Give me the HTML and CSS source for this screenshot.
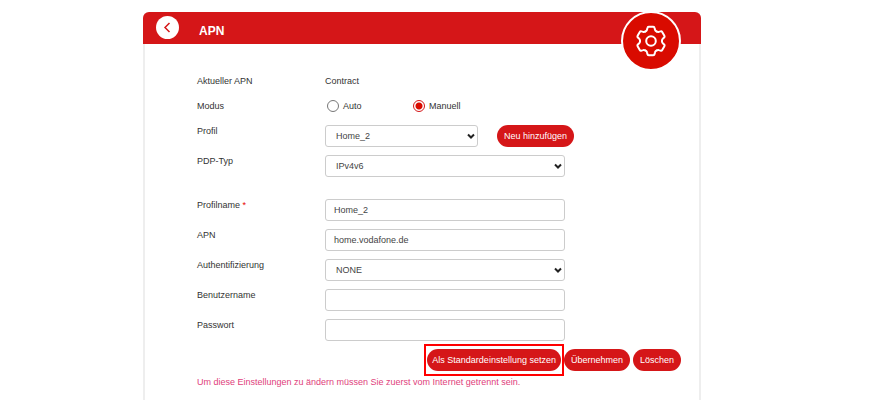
FILE: index.html
```html
<!DOCTYPE html>
<html lang="de">
<head>
<meta charset="utf-8">
<meta name="viewport" content="width=device-width, initial-scale=1">
<title>APN</title>
<link rel="stylesheet" href="styles.css">
</head>
<body>
<main class="panel">
  <header class="panel-header">
    <button class="back" type="button" aria-label="Zurück">
      <svg viewBox="0 0 24 24" width="24" height="24" fill="none" stroke="currentColor" stroke-width="1.5"><path d="M13.500 7 9 11.500l4.500 4.500"/></svg>
    </button>
    <h1>APN</h1>
    <div class="badge">
      <svg viewBox="-16 -16 32 32" width="32" height="32" fill="none" stroke="currentColor" stroke-width="2" stroke-linecap="round">
        <path id="tooth" d="M-5.500-9.500Q-4.200-10.250-4-11.300L-3.600-13Q-3.400-14.200-2.200-14.200H2.200Q3.400-14.200 3.600-13L4-11.300Q4.200-10.250 5.500-9.500"/>
        <use href="#tooth" transform="rotate(60)"/>
        <use href="#tooth" transform="rotate(120)"/>
        <use href="#tooth" transform="rotate(180)"/>
        <use href="#tooth" transform="rotate(240)"/>
        <use href="#tooth" transform="rotate(300)"/>
        <circle r="4.800"/>
      </svg>
    </div>
  </header>
  <form class="form">
    <div class="row row-text">
      <span class="label">Aktueller APN</span>
      <span class="value">Contract</span>
    </div>
    <div class="row row-mode" role="radiogroup" aria-labelledby="mode">
      <span class="label" id="mode">Modus</span>
      <div class="radios">
        <label class="radio"><input type="radio" name="mode"><span>Auto</span></label>
        <label class="radio"><input type="radio" name="mode" checked><span>Manuell</span></label>
      </div>
    </div>
    <div class="row row-profile">
      <label class="label" for="profile">Profil</label>
      <div class="profile">
        <div class="select">
          <select id="profile"><option>Home_2</option></select>
          <svg class="chevron" viewBox="0 0 8 6" width="8" height="6"><path d="m1 1.500 3 3 3-3"/></svg>
        </div>
        <button class="pill" type="button">Neu hinzufügen</button>
      </div>
    </div>
    <div class="row">
      <label class="label" for="pdp">PDP-Typ</label>
      <div class="select">
        <select id="pdp"><option>IPv4v6</option></select>
        <svg class="chevron" viewBox="0 0 8 6" width="8" height="6"><path d="m1 1.500 3 3 3-3"/></svg>
      </div>
    </div>
    <div class="group">
      <div class="row">
        <label class="label" for="name">Profilname <span class="required">*</span></label>
        <input class="text" id="name" type="text" value="Home_2">
      </div>
      <div class="row">
        <label class="label" for="apn">APN</label>
        <input class="text" id="apn" type="text" value="home.vodafone.de">
      </div>
      <div class="row">
        <label class="label" for="auth">Authentifizierung</label>
        <div class="select">
          <select id="auth"><option>NONE</option></select>
          <svg class="chevron" viewBox="0 0 8 6" width="8" height="6"><path d="m1 1.500 3 3 3-3"/></svg>
        </div>
      </div>
      <div class="row">
        <label class="label" for="user">Benutzername</label>
        <input class="text" id="user" type="text">
      </div>
      <div class="row">
        <label class="label" for="password">Passwort</label>
        <input class="text" id="password" type="password">
      </div>
    </div>
    <div class="actions">
      <div class="highlight"><button class="pill" type="button">Als Standardeinstellung setzen</button></div>
      <button class="pill" type="submit">Übernehmen</button>
      <button class="pill" type="button">Löschen</button>
    </div>
    <p class="note">Um diese Einstellungen zu ändern müssen Sie zuerst vom Internet getrennt sein.</p>
  </form>
</main>
</body>
</html>
```
FILE: styles.css
```css
* {
  box-sizing: border-box;
}

body {
  margin: 0;
  padding: 12px 178px 0 143px;
  background: #fff;
  color: #333;
  font: 9px/12px "Liberation Sans", Arial, sans-serif;
}

.panel {
  min-width: 540px;
  min-height: calc(100vh - 12px);
  border: solid #eee;
  border-width: 0 2px;
  border-radius: 6px 6px 0 0;
}

.panel-header {
  position: relative;
  display: flex;
  align-items: center;
  gap: 20px;
  height: 32px;
  margin: 0 -2px;
  padding-left: 13px;
  border-radius: 6px 6px 0 0;
  background: #d51618;
  color: #fff;
}

.back {
  display: grid;
  place-items: center;
  width: 23px;
  height: 23px;
  margin-bottom: 2px;
  padding: 0;
  border: 0;
  border-radius: 50%;
  background: #fff;
  color: #d51618;
}

h1 {
  margin: 6px 0 0;
  font: bold 12px/16px "Liberation Sans", Arial, sans-serif;
}

.badge {
  position: absolute;
  top: -1px;
  right: 20px;
  display: grid;
  place-items: center;
  width: 60px;
  height: 60px;
  border: 2px solid #fff;
  border-radius: 50%;
  background: #d90b00;
  color: #fff;
}

.form {
  padding: 31px 18px 12px 52px;
}

.row {
  display: grid;
  grid-template-columns: 128px minmax(0, 240px);
  align-items: start;
  margin-bottom: 8px;
}

.row-text,
.row-mode {
  margin-bottom: 13px;
}

.row-profile {
  grid-template-columns: 128px auto;
}

.required {
  color: #e60000;
}

.radios {
  display: flex;
}

.radio {
  display: flex;
  align-items: center;
  gap: 4px;
  width: 86px;
}

.radio input {
  appearance: none;
  width: 12px;
  height: 12px;
  margin: 0 0 0 2px;
  border: 1px solid #777;
  border-radius: 50%;
  background: #fff;
}

.radio input:checked {
  border-color: #d51618;
  background: radial-gradient(circle, #d90b00 3px, #fff 4px);
}

.profile {
  display: flex;
  gap: 19px;
}

.profile .select {
  width: 153px;
}

.select {
  position: relative;
}

.select select,
.text {
  display: block;
  width: 100%;
  height: 22px;
  margin: 0;
  padding: 0 8px;
  border: 1px solid #ccc;
  border-radius: 3px;
  background: #fff;
  color: #444;
  font: inherit;
}

.select select {
  appearance: none;
  padding: 0 16px 0 10px;
}

.chevron {
  position: absolute;
  top: 8px;
  right: 3px;
  fill: none;
  stroke: #222;
  stroke-width: 2;
  pointer-events: none;
}

.group {
  padding-top: 14px;
}

.pill {
  height: 22px;
  padding: 0 7px;
  border: 0;
  border-radius: 11px;
  background: #d51618;
  color: #fff;
  font: inherit;
  white-space: nowrap;
}

.actions {
  display: flex;
  justify-content: flex-end;
  align-items: center;
  gap: 3px;
  margin-top: -5px;
}

.highlight {
  margin-right: -3px;
  padding: 3px 1px;
  border: 2px solid #f00;
}

.highlight .pill {
  padding: 0 5px;
}

.note {
  margin: 0;
  color: #e0407b;
}
```
